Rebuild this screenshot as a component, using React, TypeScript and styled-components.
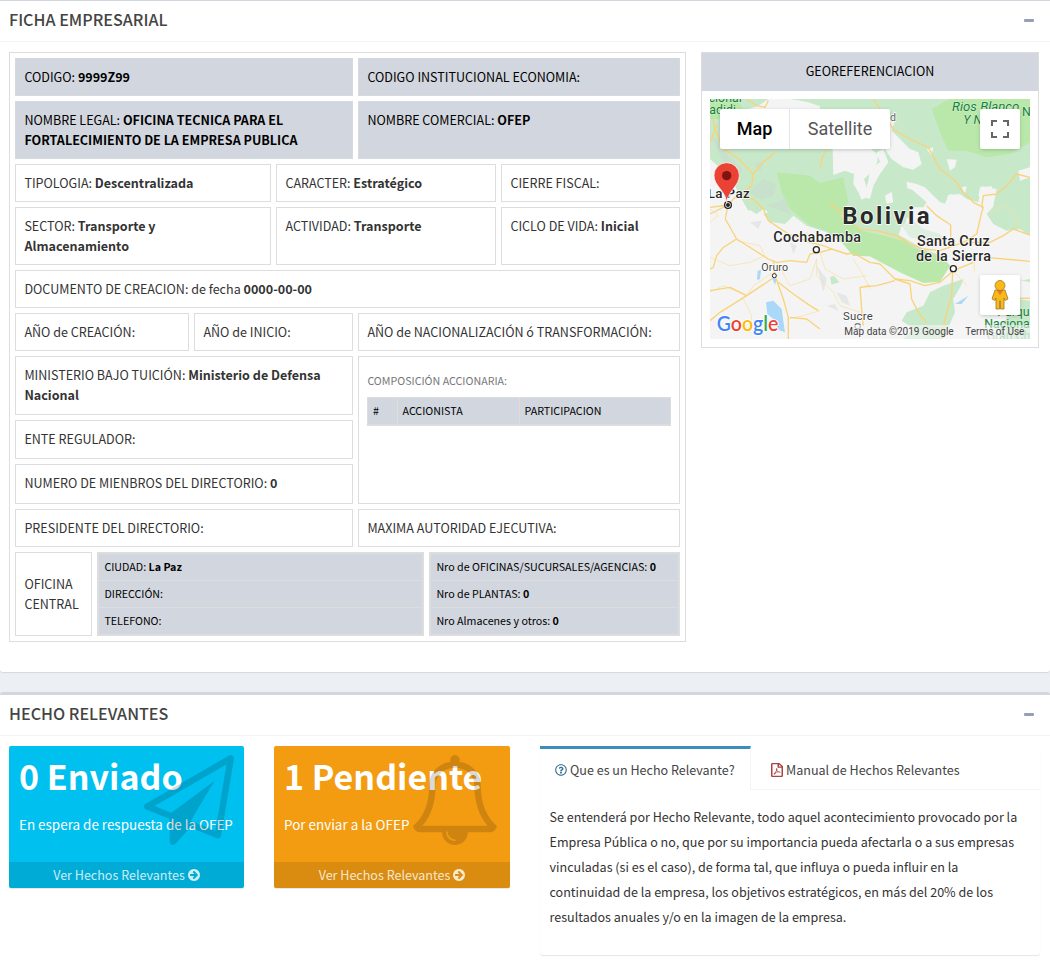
import React from "react";
import styled, { createGlobalStyle } from "styled-components";
import { FaRegFilePdf, FaRegQuestionCircle } from "react-icons/fa";

const GlobalStyle = createGlobalStyle`
  *, *::before, *::after { box-sizing: border-box; }
  body {
    margin: 0;
    background: #ecf0f5;
    color: #333;
    font-family: "Noto Sans CJK SC", "Noto Sans", sans-serif;
    font-size: 12.55px;
    line-height: 20px;
  }
`;

const Page = styled.main`
  width: 1050px;
  height: 978px;
  overflow: hidden;
`;

const Box = styled.section<{ $line: number; $height: number }>`
  height: ${(p) => p.$height}px;
  background: #fff;
  border-top: ${(p) => p.$line}px solid #d2d6de;
  border-radius: ${(p) => (p.$line > 1 ? "3px" : "0 0 3px 3px")};
  box-shadow: 0 1px 1px rgba(0, 0, 0, 0.1);
  margin-bottom: 20px;
`;

const BoxHeader = styled.header`
  height: 41px;
  padding: 0 16px 2px 9px;
  border-bottom: 1px solid #f4f4f4;
  display: flex;
  align-items: center;
  justify-content: space-between;
`;

const BoxTitle = styled.h3`
  margin: 0 0 2px;
  font-size: 16.15px;
  line-height: 18px;
  font-weight: 500;
  color: #444;
`;

const Minus = styled.span`
  width: 10px;
  height: 3px;
  border-radius: 1px;
  background: #97a0b3;
`;

const Body = styled.div`
  display: flex;
  align-items: flex-start;
  padding: 10px 9px;
`;

const Sheet = styled.div`
  width: 677px;
  border: 1px solid #ddd;
  padding: 5px;
  display: flex;
  flex-direction: column;
  gap: 5px;
`;

const Row = styled.div<{ $cols: string }>`
  display: grid;
  grid-template-columns: ${(p) => p.$cols};
  gap: 5px;
`;

const Stack = styled.div`
  display: grid;
  grid-template-rows: 59px 39px 40px;
  gap: 5px;
`;

const Cell = styled.div<{ $shade?: boolean; $middle?: boolean }>`
  border: 1px solid ${(p) => (p.$shade ? "#d6d9df" : "#ddd")};
  background: ${(p) => (p.$shade ? "#d2d6de" : "#fff")};
  color: ${(p) => (p.$shade ? "#000" : "#333")};
  padding: 8px 8px 8px 8.4px;
  ${(p) => p.$middle && "display: flex; align-items: center;"}

  b { font-weight: 700; }
`;

const Caption = styled.div`
  margin: 6px 0 6px;
  font-size: 10.7px;
  line-height: 20px;
  color: #777;
`;

const MiniHead = styled.div`
  display: grid;
  grid-template-columns: 29px 122px 1fr;
  height: 29px;
  width: 304px;
  margin-left: -0.4px;
  border: 1px solid #ddd;
  border-bottom-width: 2px;
  background: #d2d6de;
  color: #000;
  font-size: 10.7px;
  line-height: 26px;

  span { padding-left: 5px; }
  span + span { border-left: 1px solid #ddd; padding-left: 4.5px; }
`;

const Lines = styled.div`
  border: 2px solid #ddd;
  background: #d2d6de;
  color: #000;
  font-size: 10.7px;
  line-height: 26px;
  height: 84px;

  div { padding-left: 5.4px; height: 26px; }
  div + div { border-top: 1px solid #ddd; height: 27px; }
`;

const GeoPanel = styled.aside`
  width: 338px;
  height: 296px;
  margin-left: 15px;
  border: 1px solid #ddd;
`;

const GeoTitle = styled.div`
  height: 38px;
  line-height: 36px;
  text-align: center;
  background: #d2d6de;
  color: #000;
`;

const MapFrame = styled.div`
  position: relative;
  width: 320px;
  height: 240px;
  margin: 8px;
  overflow: hidden;
  font-family: Roboto, sans-serif;

  > svg { display: block; }
`;

const MapTypes = styled.div`
  position: absolute;
  left: 10px;
  top: 10px;
  display: flex;
  height: 40px;
  background: #fff;
  border-radius: 2px;
  box-shadow: 0 1px 4px -1px rgba(0, 0, 0, 0.3);
  font-size: 18px;
  line-height: 40px;
`;

const MapType = styled.span<{ $active?: boolean }>`
  width: ${(p) => (p.$active ? 70 : 100)}px;
  text-align: center;
  color: ${(p) => (p.$active ? "#000" : "#565656")};
  font-weight: ${(p) => (p.$active ? 500 : 400)};
  ${(p) => p.$active && "border-right: 1px solid #e6e6e6;"}
`;

const MapButton = styled.div<{ $top: number }>`
  position: absolute;
  right: 10px;
  top: ${(p) => p.$top}px;
  width: 40px;
  height: 40px;
  background: #fff;
  border-radius: 2px;
  box-shadow: 0 1px 4px -1px rgba(0, 0, 0, 0.3);
  display: flex;
  align-items: center;
  justify-content: center;
`;

const Columns = styled.div`
  display: flex;
  align-items: flex-start;
  padding: 10px 9px;
`;

const SmallBox = styled.article<{ $color: string; $width: number; $gap: number }>`
  position: relative;
  width: ${(p) => p.$width}px;
  height: 142px;
  margin-right: ${(p) => p.$gap}px;
  border-radius: 2px;
  background: ${(p) => p.$color};
  box-shadow: 0 1px 1px rgba(0, 0, 0, 0.1);
  color: #fff;
  display: flex;
  flex-direction: column;
`;

const Inner = styled.div`
  flex: 1;
  padding: 9px 10px;
`;

const Count = styled.h3`
  margin: 0 0 14px;
  font-size: 34px;
  line-height: 42px;
  font-weight: 700;
  white-space: nowrap;
`;

const Note = styled.p`
  margin: 0;
  padding-top: 3px;
  font-size: 13.45px;
  line-height: 20px;
  white-space: nowrap;
`;

const Watermark = styled.svg<{ $right: number }>`
  position: absolute;
  top: 9px;
  right: ${(p) => p.$right}px;
  fill: rgba(0, 0, 0, 0.15);
`;

const More = styled.div`
  height: 26px;
  border-radius: 0 0 2px 2px;
  background: rgba(0, 0, 0, 0.1);
  color: rgba(255, 255, 255, 0.8);
  display: flex;
  align-items: center;
  justify-content: center;
  gap: 3px;

  svg { fill: currentColor; }
`;

const Tabs = styled.div`
  width: 500px;
  height: 209px;
  background: #fff;
  border-radius: 3px;
  box-shadow: 0 1px 1px rgba(0, 0, 0, 0.1);
`;

const TabBar = styled.nav`
  height: 44px;
  display: flex;
  border-bottom: 1px solid #f4f4f4;
`;

const Tab = styled.div<{ $active?: boolean }>`
  display: flex;
  align-items: center;
  gap: 3px;
  height: 44px;
  padding: 1px 15px 0;
  color: #444;
  white-space: nowrap;
  border-top: 3px solid ${(p) => (p.$active ? "#3c8dbc" : "transparent")};
  ${(p) =>
    p.$active
      ? "width: 211px; background: #fff; border-right: 1px solid #f4f4f4;"
      : "margin-left: 5px;"}
`;

const Copy = styled.p`
  margin: 0;
  padding: 14px 9.5px;
  line-height: 25px;
  white-space: nowrap;
`;

const PdfIcon = styled(FaRegFilePdf)`
  width: 12px;
  height: 14px;
  color: #a94442;
`;

const ArrowCircle = () => (
  <svg width="12" height="12" viewBox="128 128 1536 1536">
    <path d="M1413 896q0-27-18-45l-91-91-362-362q-18-18-45-18t-45 18l-91 91q-18 18-18 45t18 45l189 189h-502q-26 0-45 19t-19 45v128q0 26 19 45t45 19h502l-189 189q-19 19-19 45t19 45l91 91q18 18 45 18t45-18l362-362 91-91q18-18 18-45zm251 0q0 209-103 385.5t-279.5 279.5-385.5 103-385.5-103-279.5-279.5-103-385.5 103-385.5 279.5-279.5 385.5-103 385.5 103 279.5 279.5 103 385.5z" />
  </svg>
);

const planePath =
  "M1764 11q33 24 27 64l-256 1536q-5 29-32 45-14 8-31 8-11 0-24-5l-527-215-298 327q-18 21-47 21-14 0-23-4-19-7-30-23.5t-11-36.5v-452l-472-193q-37-14-40-55-3-39 32-59l1664-960q35-21 68 2zm-342 1499l221-1323-1434 827 336 137 863-639-478 797z";
const bellPath =
  "M912 1696q0-16-16-16-59 0-101.5-42.5t-42.5-101.5q0-16-16-16t-16 16q0 73 51.5 124.5t124.5 51.5q16 0 16-16zm-666-288h1300q-266-300-266-832 0-51-24-105t-69-103-121.5-80.5-169.5-31.5-169.5 31.5-121.5 80.5-69 103-24 105q0 532-266 832zm1482 0q0 52-38 90t-90 38h-448q0 106-75 181t-181 75-181-75-75-181h-448q-52 0-90-38t-38-90q50-42 91-88t85-119.5 74.5-158.5 50-206 19.5-260q0-152 117-282.5t307-158.5q-8-19-8-39 0-40 28-68t68-28 68 28 28 68q0 20-8 39 190 28 307 158.5t117 282.5q0 139 19.5 260t50 206 74.5 158.5 85 119.5 91 88z";

const GoogleMark = () => (
  <text x="20" y="697" fontSize="61" fontFamily="Lato, sans-serif" fontWeight="600" textLength="185" lengthAdjust="spacingAndGlyphs" stroke="#fff" strokeWidth="5" strokeLinejoin="round" paintOrder="stroke">
    <tspan fill="#4285f4">G</tspan>
    <tspan fill="#ea4335">o</tspan>
    <tspan fill="#fbbc05">o</tspan>
    <tspan fill="#4285f4">g</tspan>
    <tspan fill="#34a853">l</tspan>
    <tspan fill="#ea4335">e</tspan>
  </text>
);

const MapDrawing = () => (
  <svg width="320" height="240" viewBox="0 0 960 720" fontFamily="Roboto, sans-serif">
    <rect width="960" height="720" fill="#f4f4f4" />
    <g fill="#c8e8ca">
      <path d="M0 0H960V410L930 385 890 395 870 340 850 320 860 270 815 262 805 310 770 300 750 285 715 288 705 315 690 310 645 265 620 255 590 248 592 268 618 275 650 310 640 325 600 325 610 355 575 380 566 408 590 420 640 450 700 470 720 500 690 545 640 550 570 520 480 472 430 470 395 430 350 400 290 380 250 350 225 375 190 370 170 335 140 320 115 335 100 310 75 260 40 215 0 180Z" />
      <path d="M760 540 740 600 745 640 700 720H580L612 690 575 665 590 640 640 620 660 580 700 560Z" />
      <path d="M815 480 860 465 880 485 850 505ZM900 500 960 520V550L910 540ZM900 640 925 600 960 605V720H850L870 690ZM770 550 778 600 795 615 765 612Z" />
      <path d="M360 535 372 530 388 550 365 557Z" />
    </g>
    <g fill="#b9e8aa">
      <path d="M200 220 300 230 330 252 400 235 415 310 390 350 455 395 520 410 570 420 620 450 690 470 720 500 690 548 640 552 570 520 480 472 430 470 395 430 350 395 300 380 240 330 215 280Z" />
      <path d="M665 30 700 10 720 0H960V130L900 165 830 175 770 155 715 155 690 100Z" />
      <path d="M0 0H80L100 30 70 60 0 60Z" />
    </g>
    <g fill="#f4f4f4">
      <path d="M175 0 240 0 290 8 330 22 330 32 110 32 145 20Z" />
      <path d="M368 148H480L505 168 500 195 478 225 462 240 478 290 455 302 445 280 430 255 432 225 405 215 370 228Z" />
      <path d="M530 45 555 65 545 95 570 120 600 150 625 160 635 195 610 212 580 205 545 180 510 130 530 95Z" />
      <path d="M475 245 480 210 510 190 500 160 520 150 535 190 510 225 490 260 480 300 462 295Z" />
      <path d="M590 250 645 268 690 310 705 315 720 285 770 300 800 320 825 335 830 365 845 395 880 395 930 385 960 400V540L900 550 860 570 870 720 700 720 735 640 730 600 765 540 715 540 722 500 690 468 640 450 568 408 580 390 640 388 690 375 650 310 610 275Z" />
      <path d="M810 265 845 262 848 285 825 305 805 290ZM710 180 740 182 735 205 720 215ZM925 215 960 205V235L930 245ZM755 265 770 262 765 285ZM525 290 545 278 550 310 530 315ZM650 150 670 145 665 170Z" />
      <path d="M600 320 625 328 610 340ZM590 355 605 365 585 385Z" />
    </g>
    <g fill="#c8e8ca">
      <path d="M575 380 610 365 640 390 690 405 700 420 650 425 600 415Z" opacity=".5" />
      <path d="M830 345 870 300 910 315 960 300V410L930 390 890 395 850 375Z" />
      <path d="M105 310 145 305 160 330 140 345 115 330ZM160 345 180 340 205 365 180 370Z" />
    </g>
    <g fill="#ccd5cf" opacity=".4">
      <path d="M0 105 20 120 50 165 100 210 80 235 40 190ZM115 280 160 240 200 255 190 290 150 300ZM170 320 225 300 240 345 200 330ZM130 195 160 185 150 220Z" />
      <path d="M120 370 155 365 145 390ZM320 500 350 540 340 580ZM240 430 260 440 250 465ZM380 580 410 590 420 620 395 610ZM350 620 375 615 385 635Z" />
    </g>
    <g fill="#a9d8f8">
      <path d="M168 610 190 605 215 630 222 680 225 700 205 692 190 660 172 645Z" />
      <path d="M143 515 153 513 150 540 141 543ZM185 535 200 540 195 557ZM735 615 775 590 755 615Z" />
    </g>
    <g fill="none" stroke="#fbdf9c" strokeWidth="2.500" opacity=".8">
      <path d="M80 425 150 440 165 470 120 490 60 500 0 475M0 580 40 560 110 590 130 560 190 520M200 490 240 560 300 540 320 480 320 530 370 580 390 620 450 640M250 430 290 400 310 440M330 460 345 510 400 540 470 530M430 480 460 530 480 570M120 700 125 650 100 600M230 660 280 650 330 635M0 330 25 350 0 370M730 515 770 560M793 480 793 520M500 400 600 430 640 460M840 340 880 315 915 350 930 385" />
    </g>
    <g fill="none" stroke="#f9d37a" strokeWidth="4" strokeLinejoin="round">
      <path d="M10 60 15 90 40 150 80 175 130 225 155 195 195 160M130 225 125 260 100 280M0 130 20 80M110 0 140 20 165 25 175 5" />
      <path d="M54 318 46 360 80 420 175 480 200 490 240 485 290 490 300 465 330 460 365 450 410 465 430 462 480 490 510 495 555 540 600 545 645 560 690 550 730 515 790 490" />
      <path d="M54 318 0 345M54 318 0 325M54 318 75 295 130 300 160 330 175 365 235 405 300 430 340 440 365 450M80 420 40 445 20 470 10 505 0 510" />
      <path d="M190 485 195 530 220 600 235 655 235 720M205 550 250 585 300 620 325 635M185 540 110 590 30 640 0 665M240 655 290 660 330 690" />
      <path d="M360 310 400 350 450 390 500 395 560 410 600 435 640 450 690 455 760 430 800 405 815 340 820 325 790 310 760 280 735 245 690 210 655 145 600 120 550 90 530 60 490 0" />
      <path d="M815 325 820 290 860 285 890 260 920 225 960 235M780 430 840 430 880 410 910 390 960 408M830 475 960 487M650 320 680 350 722 378 722 420M555 540 600 555 605 600 625 640 650 670M728 515 725 590 705 660 695 720M480 560 450 565 455 630 460 680M450 565 500 560 555 545M330 210 335 180 350 150M0 575 60 565 110 590" />
      <path d="M930 598H960" />
    </g>
    <g fill="#12803a" stroke="#e9f7e4" strokeWidth="2" paintOrder="stroke" fontSize="37">
      <text x="-4" y="9">cional</text>
      <text x="-2" y="44">adidi</text>
      <g fontStyle="italic" fontSize="37">
        <text x="726" y="36" textLength="202" lengthAdjust="spacingAndGlyphs">Rios Blanco</text>
        <text x="760" y="76">Y Negro</text>
      </g>
      <text x="936" y="52">N</text>
      <text x="862" y="650">Parque</text>
      <text x="823" y="688">Nacional</text>
      <text x="830" y="724" opacity=".5">Gran Ch</text>
    </g>
    <g fill="#292929" stroke="#fff" strokeWidth="4" strokeLinejoin="round" paintOrder="stroke">
      <text x="540" y="67" fontSize="32" fill="#666">d</text>
      <text x="-7" y="297" fontSize="40" fontWeight="500" textLength="126">La Paz</text>
      <text x="397" y="376" fontSize="72" fontWeight="700" textLength="262">Bolivia</text>
      <text x="190" y="430" fontSize="43" fontWeight="500" textLength="263">Cochabamba</text>
      <text x="621" y="442" fontSize="43" fontWeight="500" textLength="218">Santa Cruz</text>
      <text x="618" y="487" fontSize="43" fontWeight="500" textLength="225">de la Sierra</text>
      <text x="154" y="516" fontSize="32" fill="#444" textLength="80">Oruro</text>
      <text x="399" y="663" fontSize="34" fill="#444" textLength="89">Sucre</text>
    </g>
    <g fill="#fff" stroke="#222" strokeWidth="4">
      <circle cx="319" cy="452" r="9" />
      <circle cx="730" cy="509" r="9" />
      <circle cx="193" cy="530" r="6" strokeWidth="3" />
      <circle cx="443" cy="682" r="8" stroke="#777" />
      <circle cx="54" cy="318" r="10" />
      <circle cx="54" cy="318" r="4" fill="#222" />
    </g>
    <path d="M50 312C48 275 12 262 12 229A38 38 0 0 1 88 229C88 262 53 275 50 312Z" fill="#ea4335" stroke="#fff" strokeWidth="2" />
    <circle cx="50" cy="230" r="14" fill="#811411" />
    <rect x="400" y="678" width="560" height="42" fill="#f5f5f5" opacity=".6" />
    <g fill="#444" fontSize="31">
      <text x="403" y="707" textLength="328" lengthAdjust="spacingAndGlyphs">Map data ©2019 Google</text>
      <text x="766" y="707" textLength="177" lengthAdjust="spacingAndGlyphs">Terms of Use</text>
    </g>
    <GoogleMark />
  </svg>
);

const Field = ({ label, value, shade, middle }: { label: string; value?: string; shade?: boolean; middle?: boolean }) => (
  <Cell $shade={shade} $middle={middle}>
    <div>
      {label} {value && <b>{value}</b>}
    </div>
  </Cell>
);

export default function App() {
  return (
    <Page>
      <GlobalStyle />
      <Box $line={1} $height={672}>
        <BoxHeader>
          <BoxTitle>FICHA EMPRESARIAL</BoxTitle>
          <Minus />
        </BoxHeader>
        <Body>
          <Sheet>
            <Row $cols="338px 322px">
              <Field shade label="CODIGO:" value="9999Z99" />
              <Field shade label="CODIGO INSTITUCIONAL ECONOMIA:" />
            </Row>
            <Row $cols="338px 322px">
              <Field shade label="NOMBRE LEGAL:" value="OFICINA TECNICA PARA EL FORTALECIMIENTO DE LA EMPRESA PUBLICA" />
              <Field shade label="NOMBRE COMERCIAL:" value="OFEP" />
            </Row>
            <Row $cols="256px 220px 179px">
              <Field label="TIPOLOGIA:" value="Descentralizada" />
              <Field label="CARACTER:" value="Estratégico" />
              <Field label="CIERRE FISCAL:" />
            </Row>
            <Row $cols="256px 220px 179px">
              <Cell>
                SECTOR: <b>Transporte y<br />Almacenamiento</b>
              </Cell>
              <Field label="ACTIVIDAD:" value="Transporte" />
              <Field label="CICLO DE VIDA:" value="Inicial" />
            </Row>
            <Row $cols="665px">
              <Field label="DOCUMENTO DE CREACION: de fecha" value="0000-00-00" />
            </Row>
            <Row $cols="174px 159px 322px">
              <Field label="AÑO de CREACIÓN:" />
              <Field label="AÑO de INICIO:" />
              <Field label="AÑO de NACIONALIZACIÓN ó TRANSFORMACIÓN:" />
            </Row>
            <Row $cols="338px 322px">
              <Stack>
                <Field label="MINISTERIO BAJO TUICIÓN:" value="Ministerio de Defensa Nacional" />
                <Field label="ENTE REGULADOR:" />
                <Field label="NUMERO DE MIENBROS DEL DIRECTORIO:" value="0" />
              </Stack>
              <Cell>
                <Caption>COMPOSICIÓN ACCIONARIA:</Caption>
                <MiniHead>
                  <span>#</span>
                  <span>ACCIONISTA</span>
                  <span>PARTICIPACION</span>
                </MiniHead>
              </Cell>
            </Row>
            <Row $cols="338px 322px">
              <Field label="PRESIDENTE DEL DIRECTORIO:" />
              <Field label="MAXIMA AUTORIDAD EJECUTIVA:" />
            </Row>
            <Row $cols="77px 327px 251px">
              <Field middle label="OFICINA CENTRAL" />
              <Lines>
                <div>CIUDAD: <b>La Paz</b></div>
                <div>DIRECCIÓN:</div>
                <div>TELEFONO:</div>
              </Lines>
              <Lines>
                <div>Nro de OFICINAS/SUCURSALES/AGENCIAS: <b>0</b></div>
                <div>Nro de PLANTAS: <b>0</b></div>
                <div>Nro Almacenes y otros: <b>0</b></div>
              </Lines>
            </Row>
          </Sheet>
          <GeoPanel>
            <GeoTitle>GEOREFERENCIACION</GeoTitle>
            <MapFrame>
              <MapDrawing />
              <MapTypes>
                <MapType $active>Map</MapType>
                <MapType>Satellite</MapType>
              </MapTypes>
              <MapButton $top={10}>
                <svg width="18" height="18" viewBox="0 0 18 18" fill="none" stroke="#666" strokeWidth="2">
                  <path d="M1 6V1H6M12 1H17V6M17 12V17H12M6 17H1V12" />
                </svg>
              </MapButton>
              <MapButton $top={176}>
                <svg width="18" height="32" viewBox="0 0 18 32" fill="#fbb917" stroke="#9a7a2c" strokeWidth=".8">
                  <path d="M4 11H14L17 20 14 21.5 13 19V30H9.5V22H8.5V30H5V19L4 21.5 1 20Z" />
                  <path d="M5.500 11 9 16 12.500 11Z" fill="#e8762c" stroke="none" />
                  <circle cx="9" cy="6.500" r="5" />
                </svg>
              </MapButton>
            </MapFrame>
          </GeoPanel>
        </Body>
      </Box>

      <Box $line={3} $height={320}>
        <BoxHeader>
          <BoxTitle>HECHO RELEVANTES</BoxTitle>
          <Minus />
        </BoxHeader>
        <Columns>
          <SmallBox $color="#00c0ef" $width={235} $gap={30}>
            <Inner>
              <Count>0 Enviado</Count>
              <Note>En espera de respuesta de la OFEP</Note>
            </Inner>
            <Watermark $right={10} width="90" height="90" viewBox="0 0 1792 1792">
              <path d={planePath} />
            </Watermark>
            <More>Ver Hechos Relevantes <ArrowCircle /></More>
          </SmallBox>
          <SmallBox $color="#f39c12" $width={236} $gap={30}>
            <Inner>
              <Count>1 Pendiente</Count>
              <Note>Por enviar a la OFEP</Note>
            </Inner>
            <Watermark $right={10} width="90" height="90" viewBox="0 0 1792 1792">
              <path d={bellPath} />
            </Watermark>
            <More>Ver Hechos Relevantes <ArrowCircle /></More>
          </SmallBox>
          <Tabs>
            <TabBar>
              <Tab $active>
                <FaRegQuestionCircle size={12} color="#31708f" />
                Que es un Hecho Relevante?
              </Tab>
              <Tab>
                <PdfIcon preserveAspectRatio="none" />
                Manual de Hechos Relevantes
              </Tab>
            </TabBar>
            <Copy>
              Se entenderá por Hecho Relevante, todo aquel acontecimiento provocado por la<br />
              Empresa Pública o no, que por su importancia pueda afectarla o a sus empresas<br />
              vinculadas (si es el caso), de forma tal, que influya o pueda influir en la<br />
              continuidad de la empresa, los objetivos estratégicos, en más del 20% de los<br />
              resultados anuales y/o en la imagen de la empresa.
            </Copy>
          </Tabs>
        </Columns>
      </Box>
    </Page>
  );
}
